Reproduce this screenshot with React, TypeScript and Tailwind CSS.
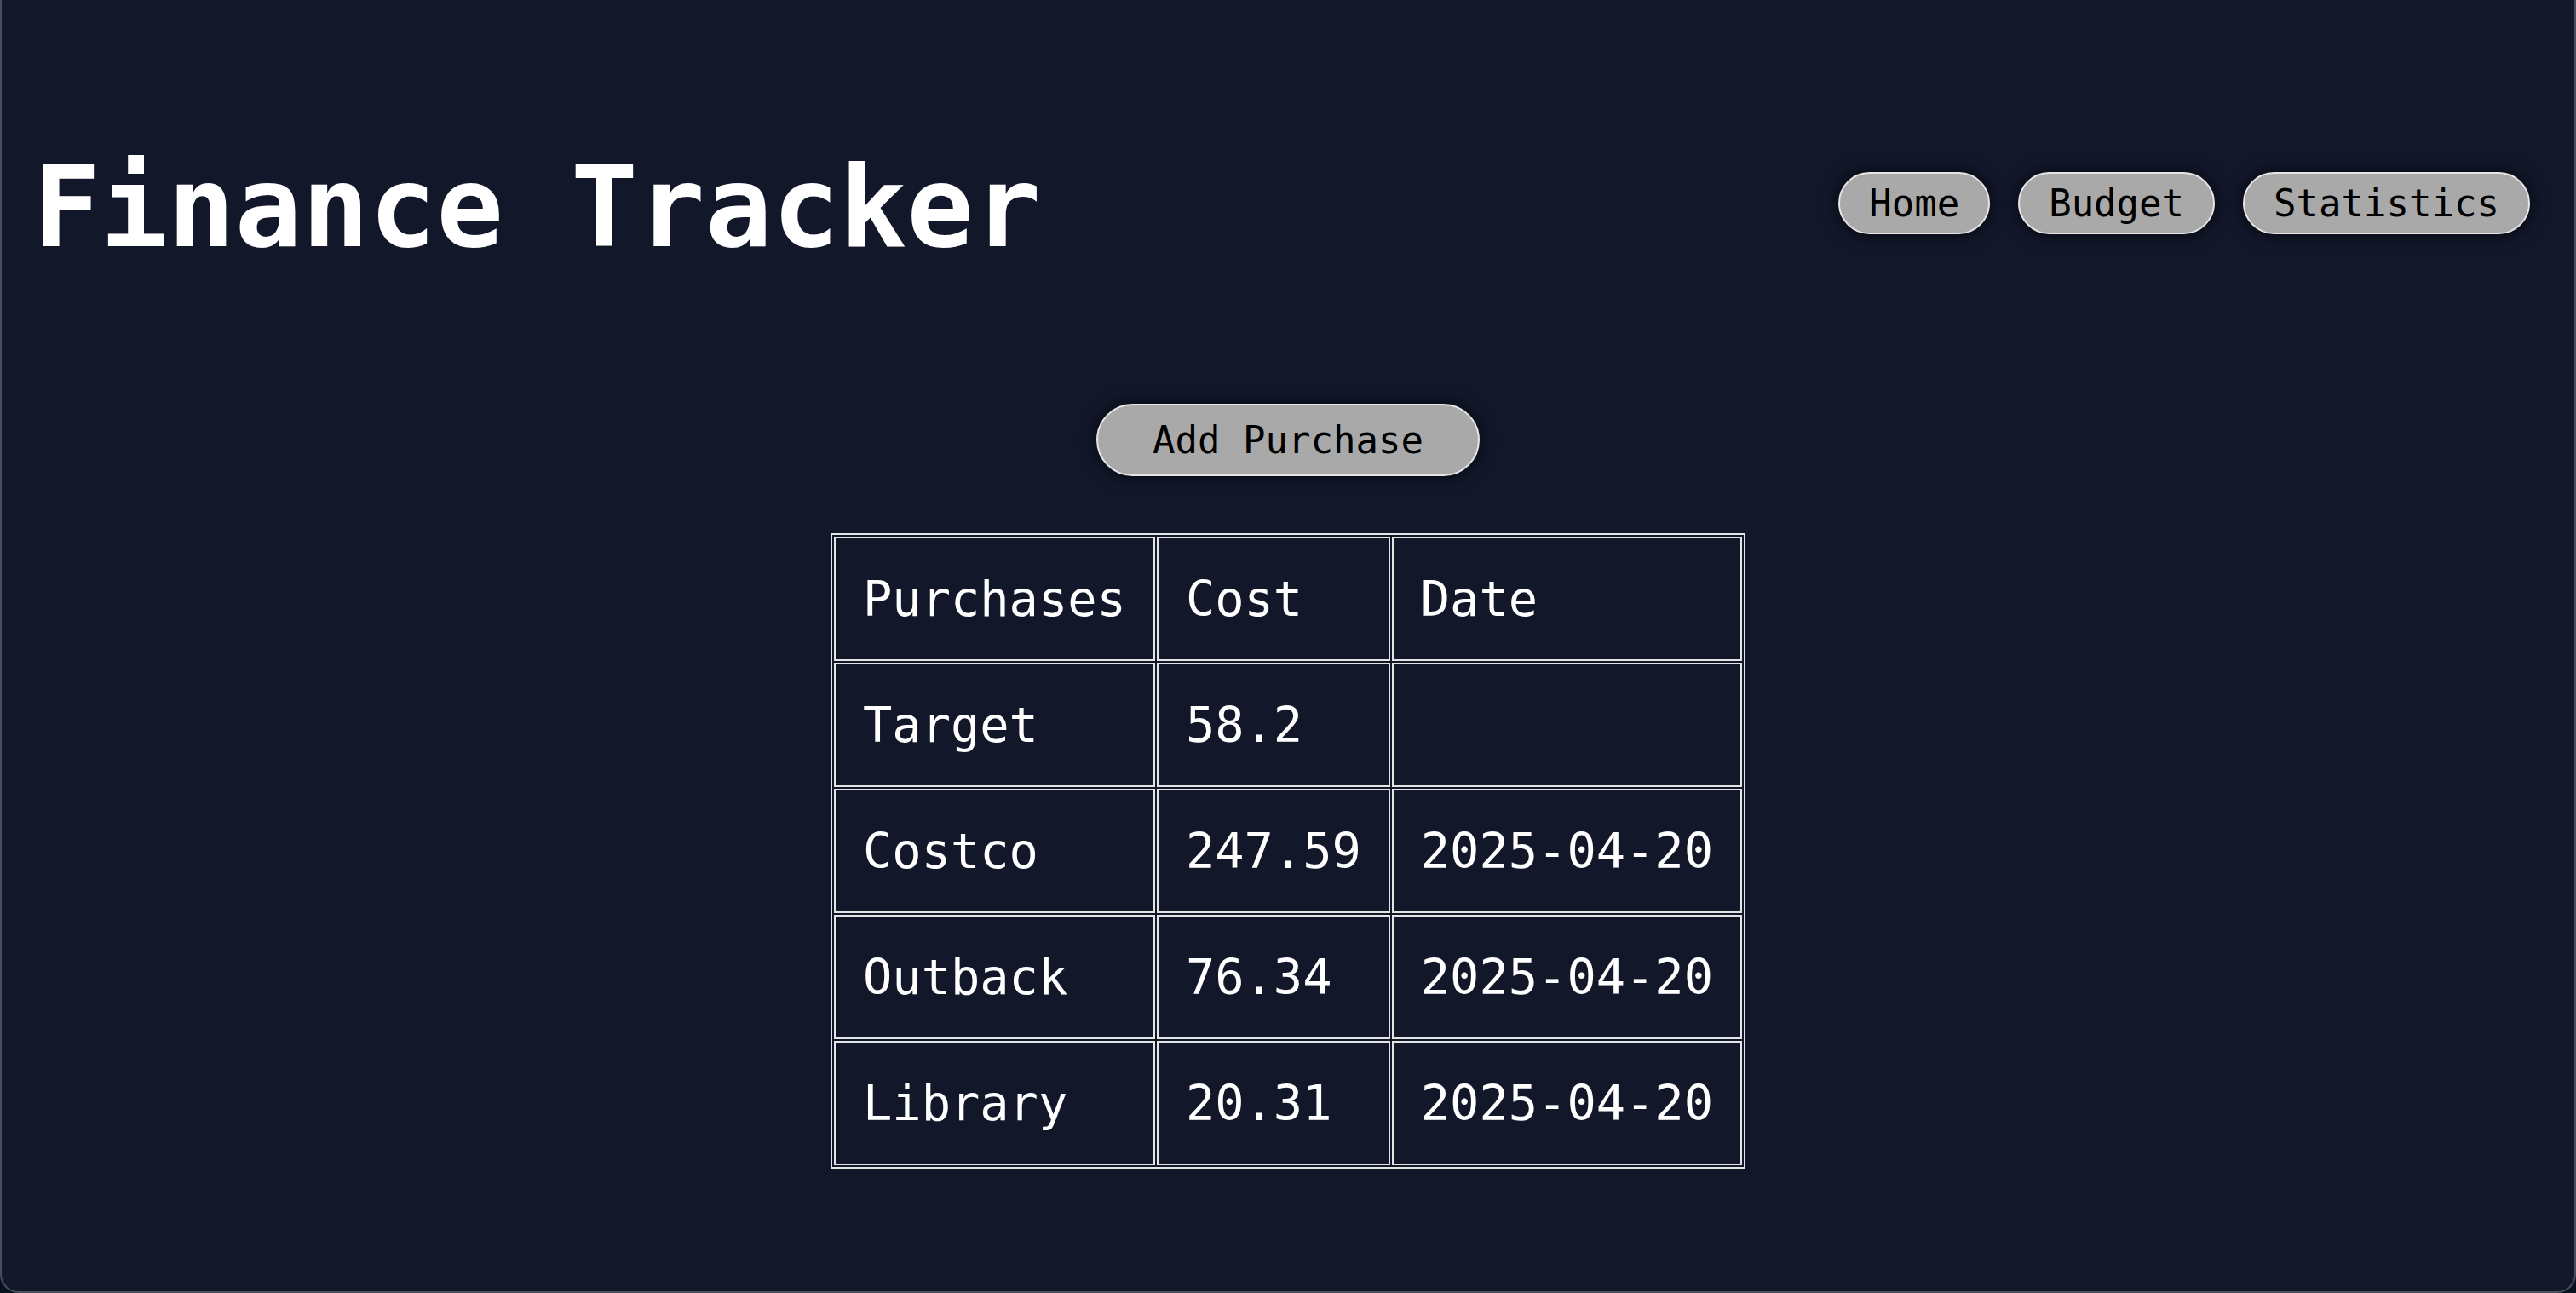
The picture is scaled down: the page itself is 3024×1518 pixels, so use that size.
const purchases = [
  { name: "Target", cost: "58.2", date: "" },
  { name: "Costco", cost: "247.59", date: "2025-04-20" },
  { name: "Outback", cost: "76.34", date: "2025-04-20" },
  { name: "Library", cost: "20.31", date: "2025-04-20" },
];

const navLinks = ["Home", "Budget", "Statistics"];

const pill =
  "rounded-full border-2 border-[#e6e6e6] bg-[#a9a9a9] text-black text-[44px] leading-[51px] shadow-[0_0_18px_rgba(0,0,0,0.75)]";

const cell = "border-2 border-[#e4e4e4] px-[32px] py-[31px] text-left font-normal leading-[80px] whitespace-nowrap";

export default function App() {
  return (
    <div className="h-[1518px] w-full bg-[#06101e]">
      <main className="h-full w-full overflow-hidden rounded-b-[22px] border-x-2 border-b-2 border-[#4b4e5c] bg-[#12172a] font-['DejaVu_Sans_Mono',monospace] text-white">
        <header className="flex items-center justify-between pl-[37px] pr-[52px] pt-[178px]">
          <h1 className="text-[131px] font-bold leading-none">Finance Tracker</h1>
          <nav className="mb-[10px] flex gap-[33px]">
            {navLinks.map((link) => (
              <button key={link} className={`${pill} px-[34px] py-[9px]`}>
                {link}
              </button>
            ))}
          </nav>
        </header>

        <section className="mt-[165px] flex flex-col items-center">
          <button className={`${pill} px-[64px] py-[15px]`}>Add Purchase</button>

          <table className="mt-[67px] border-separate border-spacing-[2px] border-2 border-[#e4e4e4] text-[57px]">
            <thead>
              <tr>
                <th className={cell}>Purchases</th>
                <th className={cell}>Cost</th>
                <th className={cell}>Date</th>
              </tr>
            </thead>
            <tbody>
              {purchases.map((p) => (
                <tr key={p.name}>
                  <td className={cell}>{p.name}</td>
                  <td className={cell}>{p.cost}</td>
                  <td className={cell}>{p.date}</td>
                </tr>
              ))}
            </tbody>
          </table>
        </section>
      </main>
    </div>
  );
}
